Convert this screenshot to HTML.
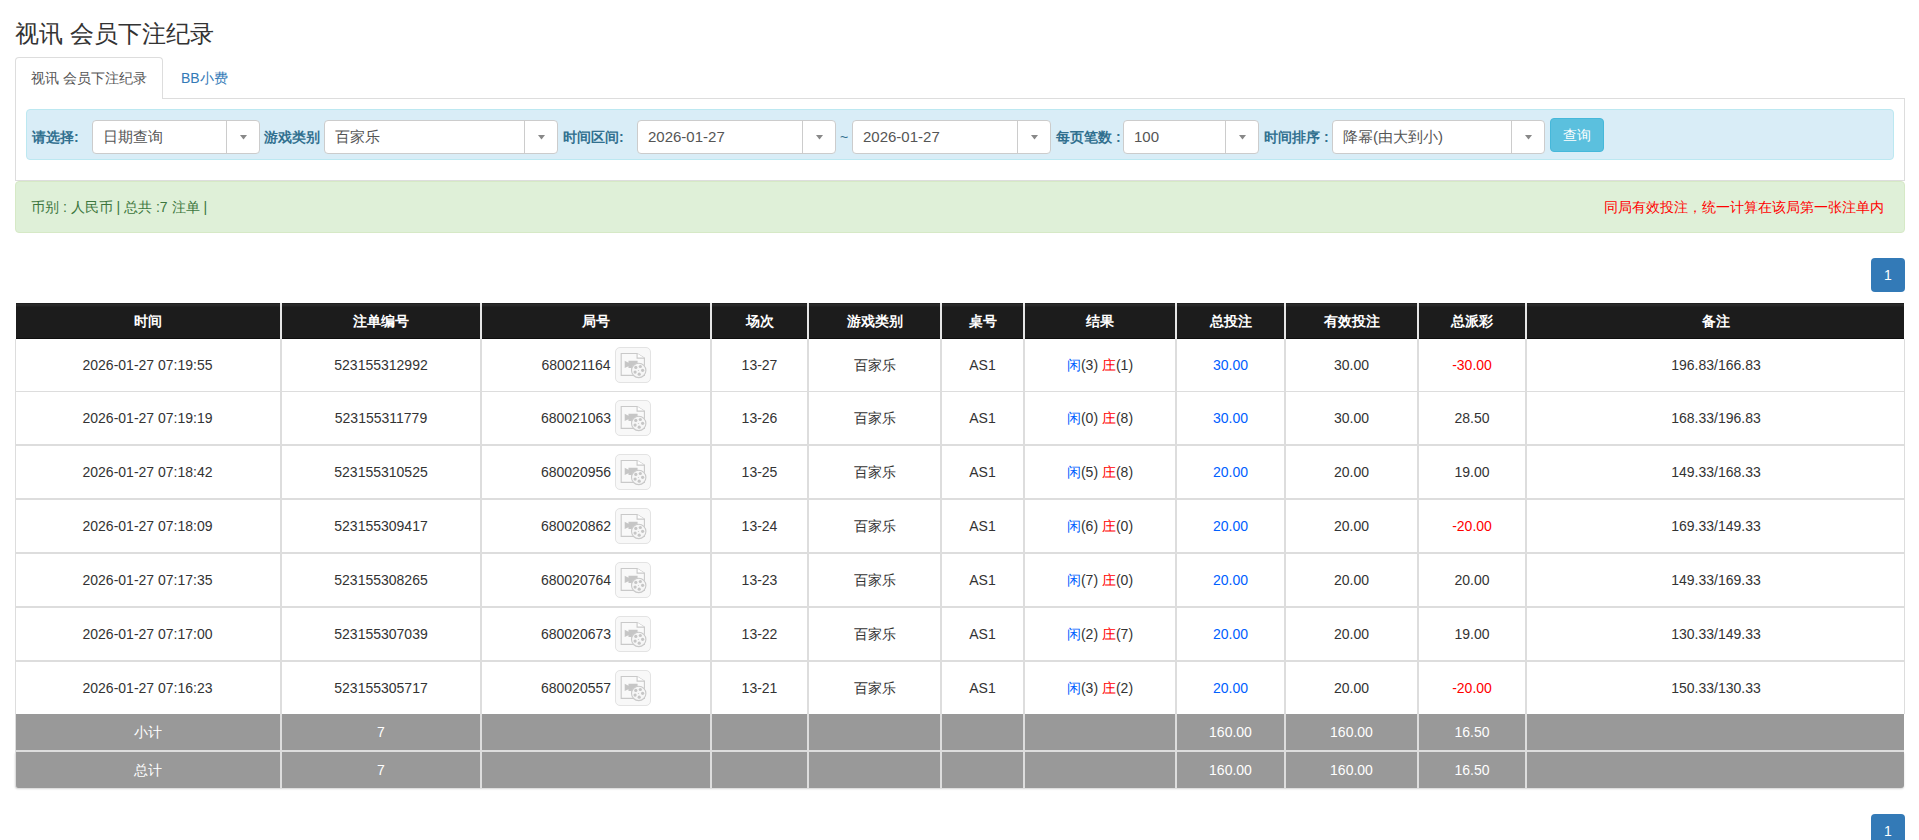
<!DOCTYPE html>
<html>
<head>
<meta charset="utf-8">
<style>
*{box-sizing:border-box;}
html,body{margin:0;padding:0;}
body{width:1919px;height:840px;overflow:hidden;position:relative;background:#fff;font-family:"Liberation Sans",sans-serif;font-size:14px;color:#333;line-height:20px;}
.abs{position:absolute;}
.title{left:15px;top:21px;font-size:24px;line-height:26px;font-weight:normal;color:#333;white-space:nowrap;}
.tabline{left:15px;top:98px;width:1890px;height:1px;background:#ddd;}
.tab1{left:15px;top:57px;width:148px;height:42px;border:1px solid #ddd;border-bottom:0;border-radius:4px 4px 0 0;background:#fff;}
.tab1 span{position:absolute;left:15px;top:10px;color:#555;white-space:nowrap;}
.tab2{left:181px;top:68px;color:#337ab7;white-space:nowrap;}
.tabc{left:15px;top:99px;width:1890px;height:82px;border:1px solid #ddd;border-top:0;}
.info{left:26px;top:109px;width:1868px;height:51px;background:#d9edf7;border:1px solid #bce8f1;border-radius:4px;}
.lbl{position:absolute;top:127px;font-weight:bold;color:#31708f;white-space:nowrap;}
.sel{position:absolute;top:120px;height:34px;background:#fff;border:1px solid #ccc;border-radius:4px;}
.sel .t{position:absolute;left:10px;top:6px;color:#555;white-space:nowrap;font-size:15px;}
.sel .sep{position:absolute;top:0;bottom:0;width:1px;background:#ccc;}
.sel .ar{position:absolute;top:14px;width:7px;height:4.5px;background:#888;clip-path:polygon(0 0,100% 0,50% 100%);}
.btn{left:1550px;top:118px;width:54px;height:34px;background:#5bc0de;border:1px solid #46b8da;border-radius:4px;color:#fff;text-align:center;line-height:32px;}
.ok{left:15px;top:181px;width:1890px;height:52px;background:#dff0d8;border:1px solid #d6e9c6;border-radius:4px;color:#3c763d;}
.ok .l{position:absolute;left:15px;top:15px;white-space:nowrap;}
.ok .r{position:absolute;right:20px;top:15px;color:#f00;white-space:nowrap;}
.th{position:absolute;top:303px;height:36px;line-height:36px;text-align:center;color:#fff;font-weight:bold;white-space:nowrap;}
.vl{position:absolute;width:2px;background:#ddd;}
.td{position:absolute;text-align:center;white-space:nowrap;color:#333;}
.tf{position:absolute;text-align:center;white-space:nowrap;color:#fff;}
.b{color:#0060ff;}
.rd{color:#f00;}
.ic{display:inline-block;position:relative;vertical-align:middle;width:36px;height:36px;margin-left:4px;margin-top:-2px;border:1px solid #e3e3e3;border-radius:5px;background:#f8f8f8;}
.ic .doc{position:absolute;left:5px;top:5px;width:24px;height:24px;}
.pg{left:1871px;width:34px;height:34px;background:#337ab7;border-radius:4px;color:#fff;text-align:center;line-height:34px;font-size:14px;}
</style>
</head>
<body>
<div class="abs title">视讯 会员下注纪录</div>
<div class="abs tabline"></div>
<div class="abs tab1"><span>视讯 会员下注纪录</span></div>
<div class="abs tab2">BB小费</div>
<div class="abs tabc"></div>
<div class="abs info"></div>

<div class="lbl" style="left:32px">请选择:</div>
<div class="sel" style="left:92px;width:168px"><span class="t">日期查询</span><span class="sep" style="left:133px"></span><span class="ar" style="left:147px"></span></div>
<div class="lbl" style="left:264px">游戏类别</div>
<div class="sel" style="left:324px;width:234px"><span class="t">百家乐</span><span class="sep" style="left:199px"></span><span class="ar" style="left:213px"></span></div>
<div class="lbl" style="left:563px">时间区间:</div>
<div class="sel" style="left:637px;width:199px"><span class="t">2026-01-27</span><span class="sep" style="left:164px"></span><span class="ar" style="left:178px"></span></div>
<div class="abs" style="left:840px;top:127px;color:#31708f">~</div>
<div class="sel" style="left:852px;width:199px"><span class="t">2026-01-27</span><span class="sep" style="left:164px"></span><span class="ar" style="left:178px"></span></div>
<div class="lbl" style="left:1056px">每页笔数 :</div>
<div class="sel" style="left:1123px;width:136px"><span class="t">100</span><span class="sep" style="left:101px"></span><span class="ar" style="left:115px"></span></div>
<div class="lbl" style="left:1264px">时间排序 :</div>
<div class="sel" style="left:1332px;width:213px"><span class="t">降幂(由大到小)</span><span class="sep" style="left:178px"></span><span class="ar" style="left:192px"></span></div>
<div class="abs btn">查询</div>

<div class="abs ok"><span class="l">币别 : 人民币 | 总共 :7 注单 |</span><span class="r">同局有效投注，统一计算在该局第一张注单内</span></div>

<div class="abs pg" style="top:258px">1</div>
<div class="abs pg" style="top:814px">1</div>

<!--TABLE-->
<div class="abs" style="left:16px;top:303px;width:1888px;height:36px;background:linear-gradient(#1e1e1e 0,#1e1e1e 1px,#2b2b2b 1px,#262626 3px,#1c1c1c 4px,#1c1c1c 35px,#0e0e0e 35px);"></div>
<div class="th" style="left:16px;width:264px">时间</div>
<div class="th" style="left:282px;width:198px">注单编号</div>
<div class="th" style="left:482px;width:228px">局号</div>
<div class="th" style="left:712px;width:95px">场次</div>
<div class="th" style="left:809px;width:131px">游戏类别</div>
<div class="th" style="left:942px;width:81px">桌号</div>
<div class="th" style="left:1025px;width:150px">结果</div>
<div class="th" style="left:1177px;width:107px">总投注</div>
<div class="th" style="left:1286px;width:131px">有效投注</div>
<div class="th" style="left:1419px;width:106px">总派彩</div>
<div class="th" style="left:1527px;width:378px">备注</div>
<div class="vl" style="left:280px;top:303px;height:36px;background:#e6e6e6"></div>
<div class="vl" style="left:480px;top:303px;height:36px;background:#e6e6e6"></div>
<div class="vl" style="left:710px;top:303px;height:36px;background:#e6e6e6"></div>
<div class="vl" style="left:807px;top:303px;height:36px;background:#e6e6e6"></div>
<div class="vl" style="left:940px;top:303px;height:36px;background:#e6e6e6"></div>
<div class="vl" style="left:1023px;top:303px;height:36px;background:#e6e6e6"></div>
<div class="vl" style="left:1175px;top:303px;height:36px;background:#e6e6e6"></div>
<div class="vl" style="left:1284px;top:303px;height:36px;background:#e6e6e6"></div>
<div class="vl" style="left:1417px;top:303px;height:36px;background:#e6e6e6"></div>
<div class="vl" style="left:1525px;top:303px;height:36px;background:#e6e6e6"></div>
<div class="abs" style="left:15px;top:339px;width:1px;height:375px;background:#ddd"></div>
<div class="abs" style="left:1904px;top:339px;width:1px;height:375px;background:#ddd"></div>
<div class="vl" style="left:280px;top:339px;height:449px"></div>
<div class="vl" style="left:480px;top:339px;height:449px"></div>
<div class="vl" style="left:710px;top:339px;height:449px"></div>
<div class="vl" style="left:807px;top:339px;height:449px"></div>
<div class="vl" style="left:940px;top:339px;height:449px"></div>
<div class="vl" style="left:1023px;top:339px;height:449px"></div>
<div class="vl" style="left:1175px;top:339px;height:449px"></div>
<div class="vl" style="left:1284px;top:339px;height:449px"></div>
<div class="vl" style="left:1417px;top:339px;height:449px"></div>
<div class="vl" style="left:1525px;top:339px;height:449px"></div>
<div class="abs" style="left:15px;top:391px;width:1890px;height:1px;background:#ddd"></div>
<div class="abs" style="left:15px;top:444px;width:1890px;height:2px;background:#ddd"></div>
<div class="abs" style="left:15px;top:498px;width:1890px;height:2px;background:#ddd"></div>
<div class="abs" style="left:15px;top:552px;width:1890px;height:2px;background:#ddd"></div>
<div class="abs" style="left:15px;top:606px;width:1890px;height:2px;background:#ddd"></div>
<div class="abs" style="left:15px;top:660px;width:1890px;height:2px;background:#ddd"></div>
<div class="td" style="left:15px;top:339px;width:265px;height:52px;line-height:52px">2026-01-27 07:19:55</div>
<div class="td" style="left:282px;top:339px;width:198px;height:52px;line-height:52px">523155312992</div>
<div class="td" style="left:482px;top:339px;width:228px;height:52px;line-height:52px">680021164<span class="ic"><svg width="36" height="36" viewBox="0 0 36 36" style="position:absolute;left:-1px;top:-1px"><path d="M6.2 6.5H22.1L29.4 11.1V28.4H6.2Z" fill="#f9f9f9" stroke="#c9c9c9" stroke-width="1.1"/><path d="M22.1 6.5V11.1H29.4" fill="#fff" stroke="#c9c9c9" stroke-width="1.1"/><path d="M13.5 13.8H22.6V21.1H13.5V19.2L9.7 21.1V13.8L13.5 15.8Z" fill="#c6c6c6"/><circle cx="23.7" cy="23.4" r="7.2" fill="#f6f6f6" stroke="#c9c9c9" stroke-width="1.1"/><g fill="#c6c6c6"><circle cx="20.8" cy="20.4" r="1.6"/><circle cx="25.3" cy="19.5" r="1.6"/><circle cx="27.6" cy="23.3" r="1.6"/><circle cx="24.2" cy="27.2" r="1.6"/><circle cx="20.1" cy="25.1" r="1.6"/><circle cx="23.4" cy="23.4" r="0.5"/></g></svg></span></div>
<div class="td" style="left:712px;top:339px;width:95px;height:52px;line-height:52px">13-27</div>
<div class="td" style="left:809px;top:339px;width:131px;height:52px;line-height:52px">百家乐</div>
<div class="td" style="left:942px;top:339px;width:81px;height:52px;line-height:52px">AS1</div>
<div class="td" style="left:1025px;top:339px;width:150px;height:52px;line-height:52px"><span class="b">闲</span>(3) <span class="rd">庄</span>(1)</div>
<div class="td b" style="left:1177px;top:339px;width:107px;height:52px;line-height:52px">30.00</div>
<div class="td" style="left:1286px;top:339px;width:131px;height:52px;line-height:52px">30.00</div>
<div class="td rd" style="left:1419px;top:339px;width:106px;height:52px;line-height:52px">-30.00</div>
<div class="td" style="left:1527px;top:339px;width:378px;height:52px;line-height:52px">196.83/166.83</div>
<div class="td" style="left:15px;top:392px;width:265px;height:52px;line-height:52px">2026-01-27 07:19:19</div>
<div class="td" style="left:282px;top:392px;width:198px;height:52px;line-height:52px">523155311779</div>
<div class="td" style="left:482px;top:392px;width:228px;height:52px;line-height:52px">680021063<span class="ic"><svg width="36" height="36" viewBox="0 0 36 36" style="position:absolute;left:-1px;top:-1px"><path d="M6.2 6.5H22.1L29.4 11.1V28.4H6.2Z" fill="#f9f9f9" stroke="#c9c9c9" stroke-width="1.1"/><path d="M22.1 6.5V11.1H29.4" fill="#fff" stroke="#c9c9c9" stroke-width="1.1"/><path d="M13.5 13.8H22.6V21.1H13.5V19.2L9.7 21.1V13.8L13.5 15.8Z" fill="#c6c6c6"/><circle cx="23.7" cy="23.4" r="7.2" fill="#f6f6f6" stroke="#c9c9c9" stroke-width="1.1"/><g fill="#c6c6c6"><circle cx="20.8" cy="20.4" r="1.6"/><circle cx="25.3" cy="19.5" r="1.6"/><circle cx="27.6" cy="23.3" r="1.6"/><circle cx="24.2" cy="27.2" r="1.6"/><circle cx="20.1" cy="25.1" r="1.6"/><circle cx="23.4" cy="23.4" r="0.5"/></g></svg></span></div>
<div class="td" style="left:712px;top:392px;width:95px;height:52px;line-height:52px">13-26</div>
<div class="td" style="left:809px;top:392px;width:131px;height:52px;line-height:52px">百家乐</div>
<div class="td" style="left:942px;top:392px;width:81px;height:52px;line-height:52px">AS1</div>
<div class="td" style="left:1025px;top:392px;width:150px;height:52px;line-height:52px"><span class="b">闲</span>(0) <span class="rd">庄</span>(8)</div>
<div class="td b" style="left:1177px;top:392px;width:107px;height:52px;line-height:52px">30.00</div>
<div class="td" style="left:1286px;top:392px;width:131px;height:52px;line-height:52px">30.00</div>
<div class="td" style="left:1419px;top:392px;width:106px;height:52px;line-height:52px">28.50</div>
<div class="td" style="left:1527px;top:392px;width:378px;height:52px;line-height:52px">168.33/196.83</div>
<div class="td" style="left:15px;top:446px;width:265px;height:52px;line-height:52px">2026-01-27 07:18:42</div>
<div class="td" style="left:282px;top:446px;width:198px;height:52px;line-height:52px">523155310525</div>
<div class="td" style="left:482px;top:446px;width:228px;height:52px;line-height:52px">680020956<span class="ic"><svg width="36" height="36" viewBox="0 0 36 36" style="position:absolute;left:-1px;top:-1px"><path d="M6.2 6.5H22.1L29.4 11.1V28.4H6.2Z" fill="#f9f9f9" stroke="#c9c9c9" stroke-width="1.1"/><path d="M22.1 6.5V11.1H29.4" fill="#fff" stroke="#c9c9c9" stroke-width="1.1"/><path d="M13.5 13.8H22.6V21.1H13.5V19.2L9.7 21.1V13.8L13.5 15.8Z" fill="#c6c6c6"/><circle cx="23.7" cy="23.4" r="7.2" fill="#f6f6f6" stroke="#c9c9c9" stroke-width="1.1"/><g fill="#c6c6c6"><circle cx="20.8" cy="20.4" r="1.6"/><circle cx="25.3" cy="19.5" r="1.6"/><circle cx="27.6" cy="23.3" r="1.6"/><circle cx="24.2" cy="27.2" r="1.6"/><circle cx="20.1" cy="25.1" r="1.6"/><circle cx="23.4" cy="23.4" r="0.5"/></g></svg></span></div>
<div class="td" style="left:712px;top:446px;width:95px;height:52px;line-height:52px">13-25</div>
<div class="td" style="left:809px;top:446px;width:131px;height:52px;line-height:52px">百家乐</div>
<div class="td" style="left:942px;top:446px;width:81px;height:52px;line-height:52px">AS1</div>
<div class="td" style="left:1025px;top:446px;width:150px;height:52px;line-height:52px"><span class="b">闲</span>(5) <span class="rd">庄</span>(8)</div>
<div class="td b" style="left:1177px;top:446px;width:107px;height:52px;line-height:52px">20.00</div>
<div class="td" style="left:1286px;top:446px;width:131px;height:52px;line-height:52px">20.00</div>
<div class="td" style="left:1419px;top:446px;width:106px;height:52px;line-height:52px">19.00</div>
<div class="td" style="left:1527px;top:446px;width:378px;height:52px;line-height:52px">149.33/168.33</div>
<div class="td" style="left:15px;top:500px;width:265px;height:52px;line-height:52px">2026-01-27 07:18:09</div>
<div class="td" style="left:282px;top:500px;width:198px;height:52px;line-height:52px">523155309417</div>
<div class="td" style="left:482px;top:500px;width:228px;height:52px;line-height:52px">680020862<span class="ic"><svg width="36" height="36" viewBox="0 0 36 36" style="position:absolute;left:-1px;top:-1px"><path d="M6.2 6.5H22.1L29.4 11.1V28.4H6.2Z" fill="#f9f9f9" stroke="#c9c9c9" stroke-width="1.1"/><path d="M22.1 6.5V11.1H29.4" fill="#fff" stroke="#c9c9c9" stroke-width="1.1"/><path d="M13.5 13.8H22.6V21.1H13.5V19.2L9.7 21.1V13.8L13.5 15.8Z" fill="#c6c6c6"/><circle cx="23.7" cy="23.4" r="7.2" fill="#f6f6f6" stroke="#c9c9c9" stroke-width="1.1"/><g fill="#c6c6c6"><circle cx="20.8" cy="20.4" r="1.6"/><circle cx="25.3" cy="19.5" r="1.6"/><circle cx="27.6" cy="23.3" r="1.6"/><circle cx="24.2" cy="27.2" r="1.6"/><circle cx="20.1" cy="25.1" r="1.6"/><circle cx="23.4" cy="23.4" r="0.5"/></g></svg></span></div>
<div class="td" style="left:712px;top:500px;width:95px;height:52px;line-height:52px">13-24</div>
<div class="td" style="left:809px;top:500px;width:131px;height:52px;line-height:52px">百家乐</div>
<div class="td" style="left:942px;top:500px;width:81px;height:52px;line-height:52px">AS1</div>
<div class="td" style="left:1025px;top:500px;width:150px;height:52px;line-height:52px"><span class="b">闲</span>(6) <span class="rd">庄</span>(0)</div>
<div class="td b" style="left:1177px;top:500px;width:107px;height:52px;line-height:52px">20.00</div>
<div class="td" style="left:1286px;top:500px;width:131px;height:52px;line-height:52px">20.00</div>
<div class="td rd" style="left:1419px;top:500px;width:106px;height:52px;line-height:52px">-20.00</div>
<div class="td" style="left:1527px;top:500px;width:378px;height:52px;line-height:52px">169.33/149.33</div>
<div class="td" style="left:15px;top:554px;width:265px;height:52px;line-height:52px">2026-01-27 07:17:35</div>
<div class="td" style="left:282px;top:554px;width:198px;height:52px;line-height:52px">523155308265</div>
<div class="td" style="left:482px;top:554px;width:228px;height:52px;line-height:52px">680020764<span class="ic"><svg width="36" height="36" viewBox="0 0 36 36" style="position:absolute;left:-1px;top:-1px"><path d="M6.2 6.5H22.1L29.4 11.1V28.4H6.2Z" fill="#f9f9f9" stroke="#c9c9c9" stroke-width="1.1"/><path d="M22.1 6.5V11.1H29.4" fill="#fff" stroke="#c9c9c9" stroke-width="1.1"/><path d="M13.5 13.8H22.6V21.1H13.5V19.2L9.7 21.1V13.8L13.5 15.8Z" fill="#c6c6c6"/><circle cx="23.7" cy="23.4" r="7.2" fill="#f6f6f6" stroke="#c9c9c9" stroke-width="1.1"/><g fill="#c6c6c6"><circle cx="20.8" cy="20.4" r="1.6"/><circle cx="25.3" cy="19.5" r="1.6"/><circle cx="27.6" cy="23.3" r="1.6"/><circle cx="24.2" cy="27.2" r="1.6"/><circle cx="20.1" cy="25.1" r="1.6"/><circle cx="23.4" cy="23.4" r="0.5"/></g></svg></span></div>
<div class="td" style="left:712px;top:554px;width:95px;height:52px;line-height:52px">13-23</div>
<div class="td" style="left:809px;top:554px;width:131px;height:52px;line-height:52px">百家乐</div>
<div class="td" style="left:942px;top:554px;width:81px;height:52px;line-height:52px">AS1</div>
<div class="td" style="left:1025px;top:554px;width:150px;height:52px;line-height:52px"><span class="b">闲</span>(7) <span class="rd">庄</span>(0)</div>
<div class="td b" style="left:1177px;top:554px;width:107px;height:52px;line-height:52px">20.00</div>
<div class="td" style="left:1286px;top:554px;width:131px;height:52px;line-height:52px">20.00</div>
<div class="td" style="left:1419px;top:554px;width:106px;height:52px;line-height:52px">20.00</div>
<div class="td" style="left:1527px;top:554px;width:378px;height:52px;line-height:52px">149.33/169.33</div>
<div class="td" style="left:15px;top:608px;width:265px;height:52px;line-height:52px">2026-01-27 07:17:00</div>
<div class="td" style="left:282px;top:608px;width:198px;height:52px;line-height:52px">523155307039</div>
<div class="td" style="left:482px;top:608px;width:228px;height:52px;line-height:52px">680020673<span class="ic"><svg width="36" height="36" viewBox="0 0 36 36" style="position:absolute;left:-1px;top:-1px"><path d="M6.2 6.5H22.1L29.4 11.1V28.4H6.2Z" fill="#f9f9f9" stroke="#c9c9c9" stroke-width="1.1"/><path d="M22.1 6.5V11.1H29.4" fill="#fff" stroke="#c9c9c9" stroke-width="1.1"/><path d="M13.5 13.8H22.6V21.1H13.5V19.2L9.7 21.1V13.8L13.5 15.8Z" fill="#c6c6c6"/><circle cx="23.7" cy="23.4" r="7.2" fill="#f6f6f6" stroke="#c9c9c9" stroke-width="1.1"/><g fill="#c6c6c6"><circle cx="20.8" cy="20.4" r="1.6"/><circle cx="25.3" cy="19.5" r="1.6"/><circle cx="27.6" cy="23.3" r="1.6"/><circle cx="24.2" cy="27.2" r="1.6"/><circle cx="20.1" cy="25.1" r="1.6"/><circle cx="23.4" cy="23.4" r="0.5"/></g></svg></span></div>
<div class="td" style="left:712px;top:608px;width:95px;height:52px;line-height:52px">13-22</div>
<div class="td" style="left:809px;top:608px;width:131px;height:52px;line-height:52px">百家乐</div>
<div class="td" style="left:942px;top:608px;width:81px;height:52px;line-height:52px">AS1</div>
<div class="td" style="left:1025px;top:608px;width:150px;height:52px;line-height:52px"><span class="b">闲</span>(2) <span class="rd">庄</span>(7)</div>
<div class="td b" style="left:1177px;top:608px;width:107px;height:52px;line-height:52px">20.00</div>
<div class="td" style="left:1286px;top:608px;width:131px;height:52px;line-height:52px">20.00</div>
<div class="td" style="left:1419px;top:608px;width:106px;height:52px;line-height:52px">19.00</div>
<div class="td" style="left:1527px;top:608px;width:378px;height:52px;line-height:52px">130.33/149.33</div>
<div class="td" style="left:15px;top:662px;width:265px;height:52px;line-height:52px">2026-01-27 07:16:23</div>
<div class="td" style="left:282px;top:662px;width:198px;height:52px;line-height:52px">523155305717</div>
<div class="td" style="left:482px;top:662px;width:228px;height:52px;line-height:52px">680020557<span class="ic"><svg width="36" height="36" viewBox="0 0 36 36" style="position:absolute;left:-1px;top:-1px"><path d="M6.2 6.5H22.1L29.4 11.1V28.4H6.2Z" fill="#f9f9f9" stroke="#c9c9c9" stroke-width="1.1"/><path d="M22.1 6.5V11.1H29.4" fill="#fff" stroke="#c9c9c9" stroke-width="1.1"/><path d="M13.5 13.8H22.6V21.1H13.5V19.2L9.7 21.1V13.8L13.5 15.8Z" fill="#c6c6c6"/><circle cx="23.7" cy="23.4" r="7.2" fill="#f6f6f6" stroke="#c9c9c9" stroke-width="1.1"/><g fill="#c6c6c6"><circle cx="20.8" cy="20.4" r="1.6"/><circle cx="25.3" cy="19.5" r="1.6"/><circle cx="27.6" cy="23.3" r="1.6"/><circle cx="24.2" cy="27.2" r="1.6"/><circle cx="20.1" cy="25.1" r="1.6"/><circle cx="23.4" cy="23.4" r="0.5"/></g></svg></span></div>
<div class="td" style="left:712px;top:662px;width:95px;height:52px;line-height:52px">13-21</div>
<div class="td" style="left:809px;top:662px;width:131px;height:52px;line-height:52px">百家乐</div>
<div class="td" style="left:942px;top:662px;width:81px;height:52px;line-height:52px">AS1</div>
<div class="td" style="left:1025px;top:662px;width:150px;height:52px;line-height:52px"><span class="b">闲</span>(3) <span class="rd">庄</span>(2)</div>
<div class="td b" style="left:1177px;top:662px;width:107px;height:52px;line-height:52px">20.00</div>
<div class="td" style="left:1286px;top:662px;width:131px;height:52px;line-height:52px">20.00</div>
<div class="td rd" style="left:1419px;top:662px;width:106px;height:52px;line-height:52px">-20.00</div>
<div class="td" style="left:1527px;top:662px;width:378px;height:52px;line-height:52px">150.33/130.33</div>
<div class="abs" style="left:15px;top:714px;width:1889px;height:36px;background:#999;border-left:1px solid #ddd;"></div>
<div class="tf" style="left:15px;top:714px;width:265px;height:36px;line-height:36px">小计</div>
<div class="tf" style="left:282px;top:714px;width:198px;height:36px;line-height:36px">7</div>
<div class="tf" style="left:1177px;top:714px;width:107px;height:36px;line-height:36px">160.00</div>
<div class="tf" style="left:1286px;top:714px;width:131px;height:36px;line-height:36px">160.00</div>
<div class="tf" style="left:1419px;top:714px;width:106px;height:36px;line-height:36px">16.50</div>
<div class="abs" style="left:15px;top:752px;width:1889px;height:36px;background:#999;border-left:1px solid #ddd;border-radius:0 0 3px 3px;box-shadow:0 1px 2px rgba(0,0,0,.18);"></div>
<div class="tf" style="left:15px;top:752px;width:265px;height:36px;line-height:36px">总计</div>
<div class="tf" style="left:282px;top:752px;width:198px;height:36px;line-height:36px">7</div>
<div class="tf" style="left:1177px;top:752px;width:107px;height:36px;line-height:36px">160.00</div>
<div class="tf" style="left:1286px;top:752px;width:131px;height:36px;line-height:36px">160.00</div>
<div class="tf" style="left:1419px;top:752px;width:106px;height:36px;line-height:36px">16.50</div>
<div class="abs" style="left:15px;top:750px;width:1889px;height:2px;background:#ddd"></div>
<div class="vl" style="left:280px;top:714px;height:74px;background:#ddd"></div>
<div class="vl" style="left:480px;top:714px;height:74px;background:#ddd"></div>
<div class="vl" style="left:710px;top:714px;height:74px;background:#ddd"></div>
<div class="vl" style="left:807px;top:714px;height:74px;background:#ddd"></div>
<div class="vl" style="left:940px;top:714px;height:74px;background:#ddd"></div>
<div class="vl" style="left:1023px;top:714px;height:74px;background:#ddd"></div>
<div class="vl" style="left:1175px;top:714px;height:74px;background:#ddd"></div>
<div class="vl" style="left:1284px;top:714px;height:74px;background:#ddd"></div>
<div class="vl" style="left:1417px;top:714px;height:74px;background:#ddd"></div>
<div class="vl" style="left:1525px;top:714px;height:74px;background:#ddd"></div>
<!--/TABLE-->
</body>
</html>
